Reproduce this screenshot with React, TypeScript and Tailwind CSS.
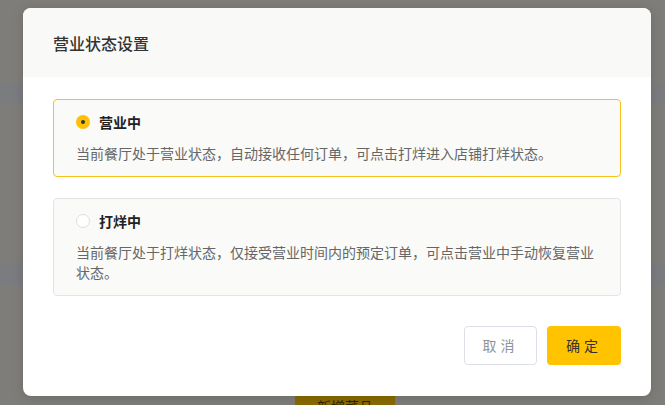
import { useState } from 'react';

const statusOptions = [
  {
    key: 'open',
    label: '营业中',
    desc: '当前餐厅处于营业状态，自动接收任何订单，可点击打烊进入店铺打烊状态。',
  },
  {
    key: 'closed',
    label: '打烊中',
    desc: '当前餐厅处于打烊状态，仅接受营业时间内的预定订单，可点击营业中手动恢复营业状态。',
  },
];

function Radio({ checked }: { checked: boolean }) {
  if (checked) {
    return (
      <span className="flex h-[14px] w-[14px] shrink-0 items-center justify-center rounded-full bg-[#ffc107]">
        <span className="h-[4px] w-[4px] rounded-full bg-[#333]" />
      </span>
    );
  }
  return <span className="h-[14px] w-[14px] shrink-0 rounded-full border border-[#dcdfe6] bg-white" />;
}

export default function App() {
  const [status, setStatus] = useState('open');

  return (
    <div
      className="relative h-[405px] w-[665px] overflow-hidden bg-[#7e7d79]"
      style={{ fontFamily: '"Noto Sans CJK SC", "Noto Sans", sans-serif' }}
    >
      {/* dimmed page behind the dialog */}
      <div className="flex h-full flex-col">
        <div className="h-[83px]" />
        <div className="h-[20px] bg-[#7a7c7f]" />
        <div className="h-[160px]" />
        <div className="h-[22px] bg-[#7a7c7f]" />
        <div className="flex-1" />
        <div className="flex h-[10px] pl-[295px]">
          <div className="h-[26px] w-[100px] bg-[#8a6a00] pl-[22px] text-[14px] leading-[22px] text-[#2a2200]">
            新增菜品
          </div>
        </div>
      </div>

      {/* dialog */}
      <div className="absolute left-[23px] top-[8px] flex h-[388px] w-[628px] flex-col overflow-hidden rounded-[8px] bg-white shadow-[0_2px_12px_rgba(0,0,0,0.15)]">
        <div className="flex h-[69px] shrink-0 items-center bg-[#f9f9f7] px-[30px]">
          <h2 className="text-[16px] font-medium text-[#333]">营业状态设置</h2>
        </div>

        <div className="flex flex-1 flex-col px-[30px] pt-[22px]">
          <div className="flex flex-col gap-[21px]">
            {statusOptions.map((opt) => {
              const checked = status === opt.key;
              return (
                <div
                  key={opt.key}
                  onClick={() => setStatus(opt.key)}
                  className={
                    checked
                      ? 'cursor-pointer rounded-[4px] border border-[#f8c21c] bg-[#fafaf8] px-[22px] pb-[13px] pt-[12px]'
                      : 'cursor-pointer rounded-[4px] border border-[#e4e4e4] bg-[#fafaf8] px-[22px] pb-[13px] pt-[12px]'
                  }
                >
                  <div className="flex h-[20px] items-center gap-[9px]">
                    <Radio checked={checked} />
                    <span className="text-[14px] font-bold text-[#222]">{opt.label}</span>
                  </div>
                  <p className="mt-[11px] text-[14px] leading-[20px] text-[#666]">{opt.desc}</p>
                </div>
              );
            })}
          </div>

          <div className="mt-[30px] flex justify-end gap-[10px]">
            <button className="h-[39px] w-[73px] rounded-[4px] border border-[#dcdfe6] bg-white text-[14px] tracking-[4px] text-[#909399]">
              取消
            </button>
            <button className="h-[39px] w-[74px] rounded-[4px] bg-[#ffc300] text-[14px] tracking-[4px] text-[#333]">
              确定
            </button>
          </div>
        </div>
      </div>
    </div>
  );
}
